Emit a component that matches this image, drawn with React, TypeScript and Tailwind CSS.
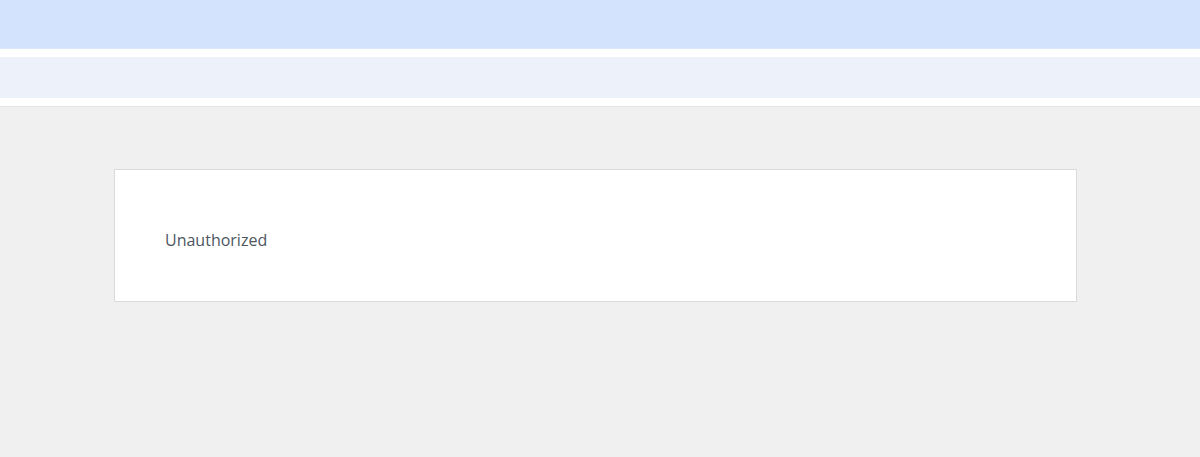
export default function App() {
  return (
    <div className="min-h-[457px] bg-[#f0f0f0] font-['Open_Sans',sans-serif]">
      <div className="bg-white border-b border-[#e3e3e3]">
        <div className="h-[49px] bg-[#d3e3fd] border-b border-[#dce8fc]" />
        <div className="h-[8px]" />
        <div className="h-[41px] bg-[#ecf1fa]" />
        <div className="h-[8px]" />
      </div>
      <div className="pt-[62px]">
        <div className="ml-[114px] w-[963px] bg-white border border-[#dadada] px-[50px] pt-[55px] pb-[46px]">
          <p className="text-[16px] leading-[30px] text-[#4d5661]">Unauthorized</p>
        </div>
      </div>
    </div>
  );
}
